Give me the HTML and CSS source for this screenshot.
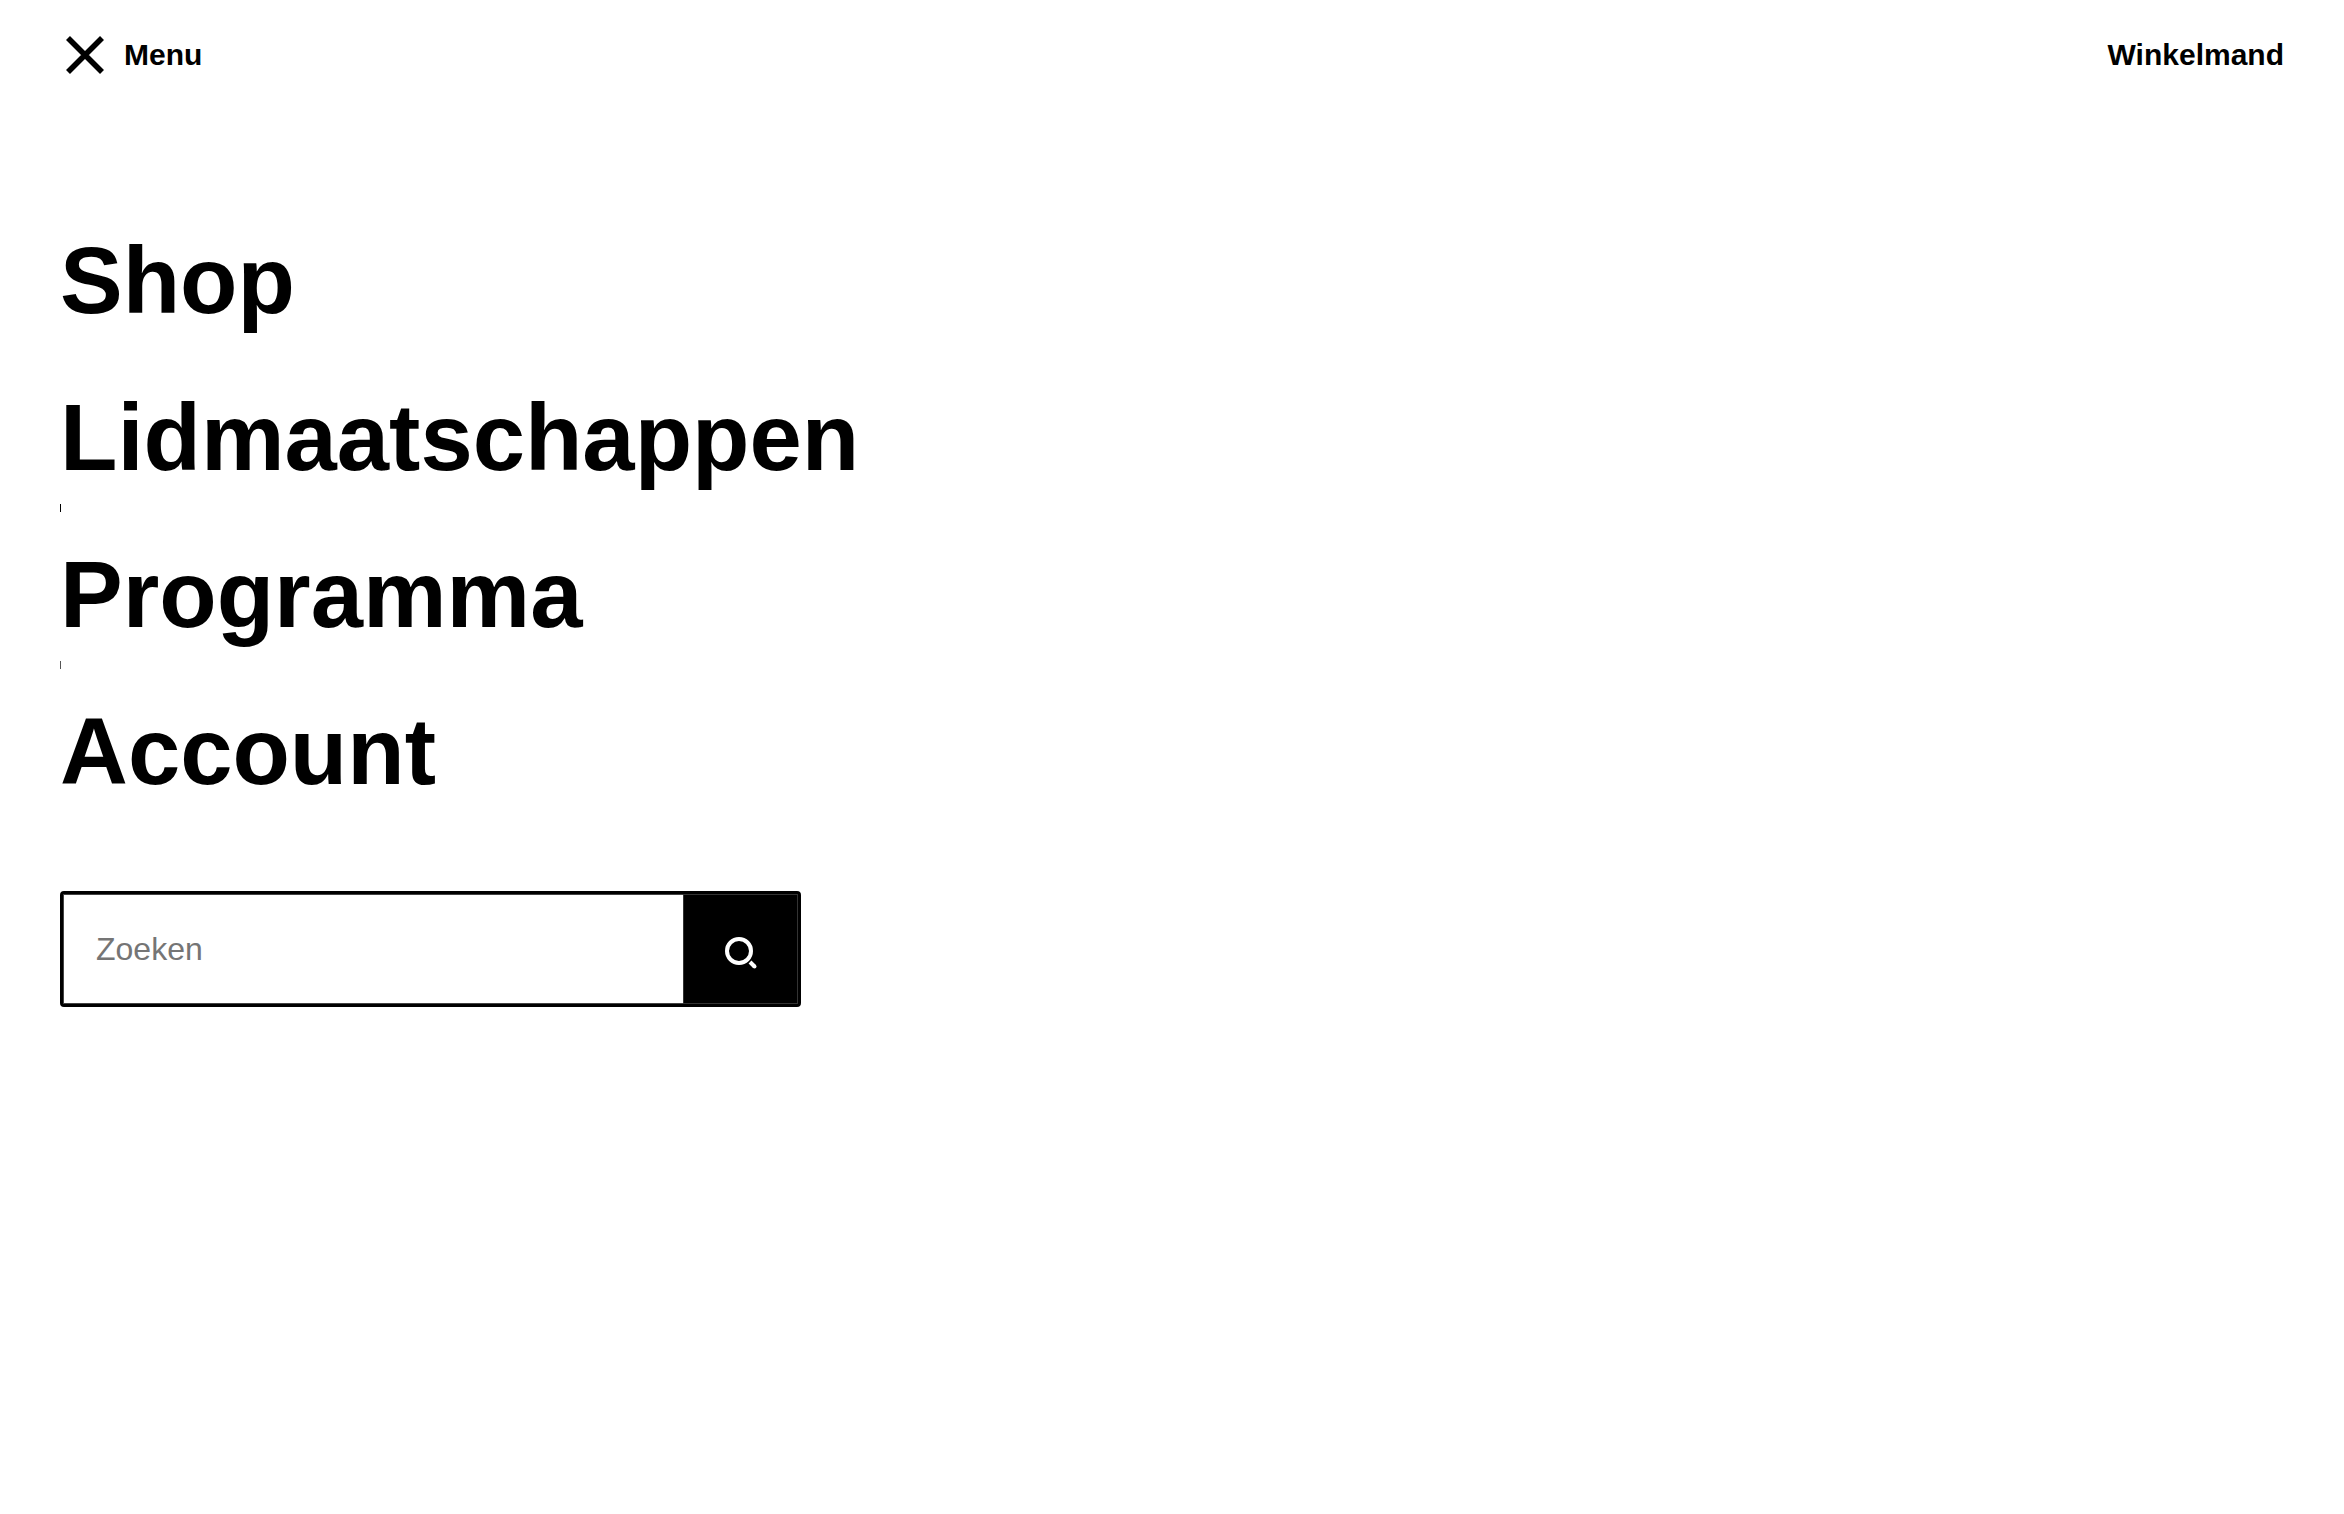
FILE: index.html
```html
<!DOCTYPE html>
<html lang="nl">
<head>
  <meta charset="utf-8">
  <meta name="viewport" content="width=device-width, initial-scale=1">
  <title>Menu</title>
  <link rel="stylesheet" href="styles.css">
</head>
<body>
  <header class="header">
    <button class="menu-toggle" type="button" aria-expanded="true">
      <svg class="close-icon" width="38" height="38" viewBox="0 0 38 38" aria-hidden="true">
        <path d="M2 2 36 36M36 2 2 36" fill="none" stroke="currentColor" stroke-width="5.6"/>
      </svg>
      <span>Menu</span>
    </button>
    <a class="cart-link" href="#">Winkelmand</a>
  </header>
  <main class="panel">
    <nav>
      <ul class="nav-list">
        <li class="nav-item"><a class="nav-link" href="#">Shop</a></li>
        <li class="nav-item nav-item-marked"><a class="nav-link" href="#">Lidmaatschappen</a></li>
        <li class="nav-item nav-item-marked nav-item-soft"><a class="nav-link" href="#">Programma</a></li>
        <li class="nav-item"><a class="nav-link" href="#">Account</a></li>
      </ul>
    </nav>
    <form class="search" role="search">
      <input class="search-input" type="search" placeholder="Zoeken" aria-label="Zoeken">
      <button class="search-button" type="submit" aria-label="Zoek">
        <svg width="34" height="34" viewBox="0 0 34 34" aria-hidden="true">
          <circle cx="15" cy="16" r="12" fill="none" stroke="currentColor" stroke-width="4"/>
          <path d="M26 27 30.500 31.500" fill="none" stroke="currentColor" stroke-width="4"/>
          <circle cx="30.500" cy="31.500" r="2" fill="currentColor"/>
        </svg>
      </button>
    </form>
  </main>
</body>
</html>
```
FILE: styles.css
```css
* {
  box-sizing: border-box;
}

body {
  margin: 0;
  background: #fff;
  color: #000;
  font-family: "Liberation Sans", Arial, sans-serif;
}

a {
  color: inherit;
  text-decoration: none;
}

.header {
  display: flex;
  align-items: center;
  justify-content: space-between;
  height: 109px;
  padding: 0 60px;
}

.menu-toggle {
  display: flex;
  align-items: center;
  gap: 20px;
  padding: 0 0 0 6px;
  border: 0;
  background: none;
  color: inherit;
  font: bold 30px/36px "Liberation Sans", Arial, sans-serif;
  cursor: pointer;
}

.cart-link {
  font-size: 30px;
  font-weight: bold;
  line-height: 36px;
}

.panel {
  padding: 118px 60px 60px;
}

.nav-list {
  display: grid;
  gap: 49px;
  margin: 0;
  padding: 0;
  list-style: none;
}

.nav-item {
  position: relative;
}

.nav-link {
  font-size: 94px;
  font-weight: bold;
  line-height: 108px;
  display: block;
}

.nav-item-marked::after {
  content: "";
  position: absolute;
  top: calc(100% + 12px);
  left: 0;
  width: 1px;
  height: 8px;
  background: #000;
}

.nav-item-soft::after {
  background: #555;
}

.search {
  display: flex;
  max-width: 741px;
  height: 116px;
  margin-top: 85px;
  border: 3px solid #000;
  border-radius: 4px;
}

.search-input {
  flex: 1;
  min-width: 0;
  padding: 0 32px;
  border: 1px solid #444;
  border-width: 1px 0 1px 1px;
  outline: 0;
  background: none;
  color: #000;
  font: 32px "Liberation Sans", Arial, sans-serif;
  appearance: none;
}

.search-input::placeholder {
  color: #757575;
}

.search-button {
  display: flex;
  align-items: center;
  justify-content: center;
  width: 115px;
  padding: 6px 0 0;
  border: 1px solid #333;
  background: #000;
  color: #fff;
  cursor: pointer;
}
```
